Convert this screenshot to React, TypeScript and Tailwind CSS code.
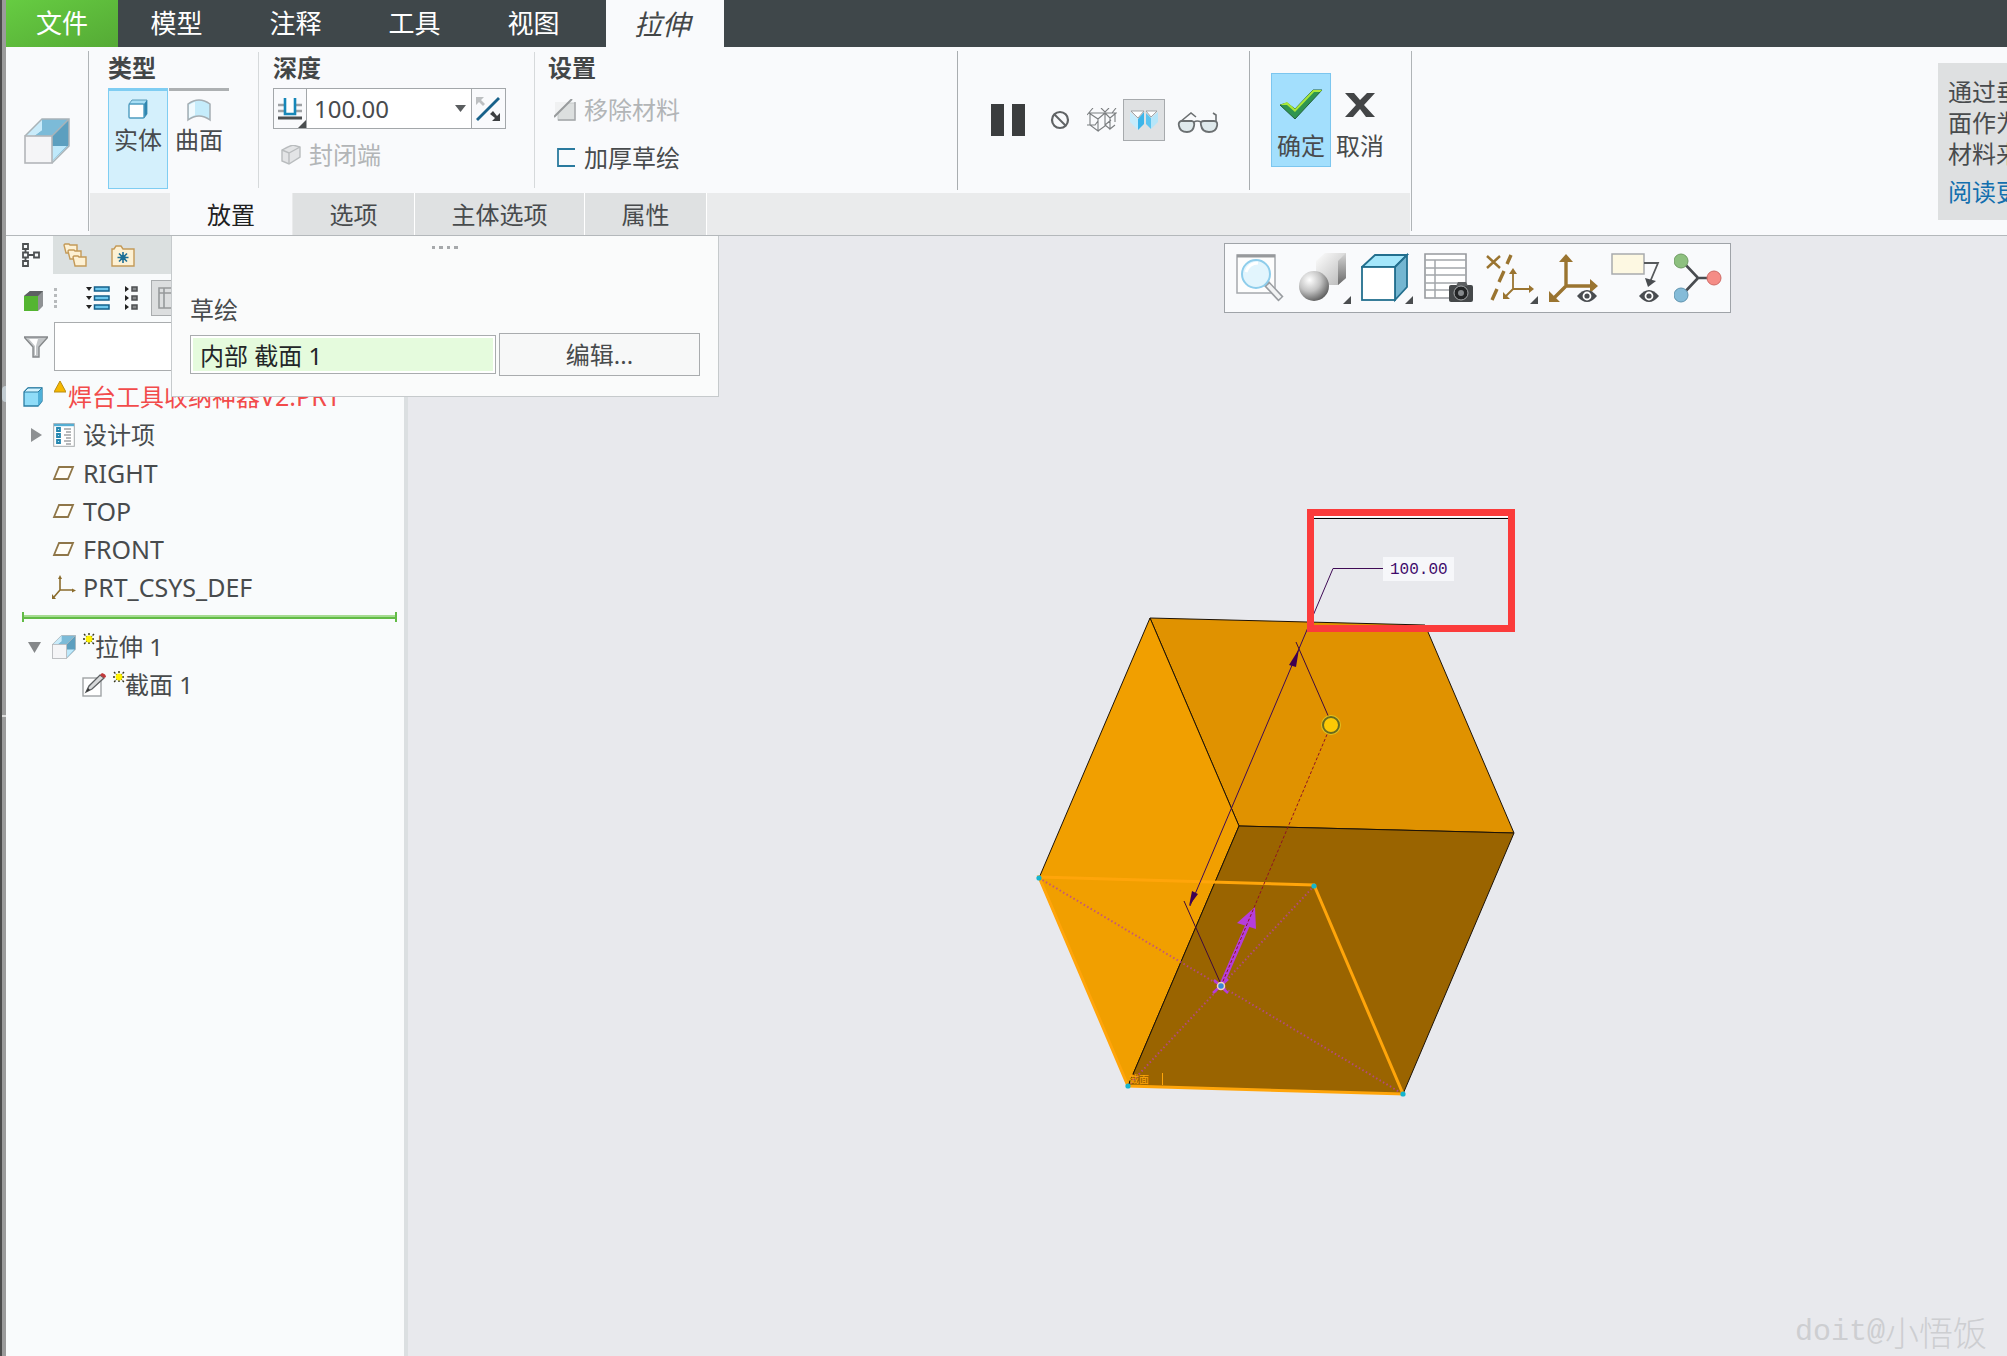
import type { ReactNode } from "react"

const menus = ["模型", "注释", "工具", "视图"]

function Divider({ dark = false }: { dark?: boolean }) {
    return <span className={dark ? "mt-1 h-[139px] w-px shrink-0 bg-[#a9adb0]" : "mt-[5px] h-[136px] w-px shrink-0 bg-[#d6d9db]"}></span>
}

function ExtrudeIcon({ className }: { className: string }) {
    return (
        <svg className={className} viewBox="0 0 46 46">
            <path d="M1 18 L18 1 H45 V28 L28 45 V18 Z" fill="#d8f1fc" />
            <path d="M18 1 H45 L28 18 H10 L18 12 Z" fill="#7cbbd8" />
            <path d="M18 1 V12 L10 18 H1 Z" fill="#c9ebfa" />
            <path d="M45 1 V27 L28 43 V18 Z" fill="#5c9fbf" />
            <path d="M28 43 V28 H43 Z" fill="#bfe9fb" />
            <path d="M1 18 L18 1 H45 V28 L28 45 M28 18 L45 1" fill="none" stroke="#a9b3b8" strokeWidth="1.5" />
            <rect x="1" y="18" width="27" height="27" fill="#f5f5f7" stroke="#b3b6b9" strokeWidth="1.6" />
        </svg>
    )
}

function Corner() {
    return (
        <svg className="absolute right-0 bottom-0 h-2 w-2" viewBox="0 0 8 8">
            <path d="M8 0 V8 H0 Z" fill="#4a4d4f" />
        </svg>
    )
}

function Star() {
    return (
        <svg className="h-3 w-3 shrink-0 -translate-y-2" viewBox="0 0 12 12">
            <path d="M1 1 L11 11 M11 1 L1 11 M6 0 V12 M0 6 H12" stroke="#33331a" strokeWidth="1.4" strokeDasharray="2 1" />
            <circle cx="6" cy="6" r="3.4" fill="#fff200" />
        </svg>
    )
}

function PlaneIcon() {
    return (
        <svg className="h-4 w-6" viewBox="0 0 24 16">
            <path d="M7 2 H21 L16 14 H2 Z" fill="#fffdf7" stroke="#8f7648" strokeWidth="1.8" />
        </svg>
    )
}

function CsysIcon() {
    return (
        <svg className="h-6 w-6" viewBox="0 0 24 24" fill="#8b6c2c" stroke="#8b6c2c">
            <path d="M8 3 V15 H21 M8 15 L2 22" fill="none" strokeWidth="1.6" />
            <path d="M8 0 L10 4 H6 Z M24 15.500 L20 13.500 V17.500 Z M0 19 V24 H4 Z" stroke="none" />
        </svg>
    )
}

function Eye({ x, y }: { x: number; y: number }) {
    return (
        <g transform={`translate(${x} ${y})`}>
            <path d="M0 6 Q10 -6 20 6 Q10 18 0 6 Z" fill="#494c50" />
            <circle cx="10" cy="6" r="4.400" fill="#fff" />
            <circle cx="10" cy="6" r="2.600" fill="#494c50" />
        </g>
    )
}

function Ribbon() {
    return (
        <section className="flex shrink-0 border-b border-[#b4b8bb] bg-[#f9fafc]">
            <div className="flex w-[82px] shrink-0 items-center justify-center">
                <ExtrudeIcon className="h-[46px] w-[46px]" />
            </div>
            <span className="my-1 mr-px w-px bg-[#b0b4b7]"></span>

            <div className="w-[1320px] shrink-0">
                <div className="flex h-[146px]">
                    {/* type */}
                    <div className="w-[168px] pt-[5px] pl-[18px]">
                        <h2 className="text-2xl leading-8 font-bold text-[#434647]">类型</h2>
                        <div className="mt-1 flex gap-px">
                            <button className="flex h-[101px] w-[60px] flex-col items-center border border-t-3 border-[#7fcdf2] bg-[#d4f0fc] pt-2">
                                <svg className="h-5 w-5" viewBox="0 0 20 20">
                                    <path d="M1 5 L4 1 H19 V15 L16 19 Z" fill="#a7def5" stroke="#5a9cba" />
                                    <path d="M16 5 L19 1 V15 L16 19 Z" fill="#2f86b0" />
                                    <rect x="1" y="5" width="15" height="14" rx="1" fill="#fff" stroke="#4d9cc0" strokeWidth="1.400" />
                                </svg>
                                <span className="mt-[5px] text-2xl leading-8">实体</span>
                            </button>
                            <button className="flex h-[101px] w-[60px] flex-col items-center border-t-3 border-[#adb0b2] pt-2">
                                <svg className="h-6 w-6" viewBox="0 0 24 24">
                                    <path d="M1 5 Q12 -3 23 5 V21 Q12 13 1 21 Z" fill="#c5ecfb" stroke="#a5adb2" strokeWidth="1.500" />
                                    <path d="M2 6 Q5 4 8 3 V16 Q5 17 2 19 Z" fill="#f0fafe" />
                                </svg>
                                <span className="mt-px text-2xl leading-8">曲面</span>
                            </button>
                        </div>
                    </div>
                    <Divider />

                    {/* depth */}
                    <div className="w-[275px] pt-[5px] pl-[14px]">
                        <h2 className="text-2xl leading-8 font-bold text-[#434647]">深度</h2>
                        <div className="mt-1 flex h-[41px] w-[233px] border border-[#a3a7aa] bg-white">
                            <button aria-label="深度类型" className="relative flex w-[33px] items-center justify-center border-r border-[#a3a7aa] bg-[#f9fafc]">
                                <svg className="h-6 w-6" viewBox="0 0 24 24">
                                    <path d="M0 8 H24 M0 14 H24" stroke="#9ea1a4" strokeWidth="2.400" />
                                    <path d="M0 21 H24" stroke="#4b4e50" strokeWidth="3" />
                                    <path d="M7 1 V17 H17 V1" fill="#fff" stroke="#1787b8" strokeWidth="2.600" />
                                </svg>
                                <Corner />
                            </button>
                            <div className="relative flex-1">
                                <select aria-label="深度值" className="h-full w-full appearance-none bg-transparent pl-[7px] text-2xl outline-none">
                                    <option>100.00</option>
                                </select>
                                <svg className="pointer-events-none absolute top-4 right-[5px] h-[7px] w-[11px]" viewBox="0 0 11 7">
                                    <path d="M0 0 H11 L5.500 7 Z" fill="#5a5d5f" />
                                </svg>
                            </div>
                            <button aria-label="反向" className="flex w-[34px] items-center justify-center border-l border-[#a3a7aa] bg-[#f9fafc] pr-0.5">
                                <svg className="h-6 w-6" viewBox="0 0 24 24">
                                    <path d="M1 23 L23 1" stroke="#17618a" strokeWidth="2.800" />
                                    <path d="M0 0 H8 L5 3 L9 7 L7 9 L3 5 L0 8 Z" fill="#bcbfc1" />
                                    <path d="M24 24 H16 L19 21 L14 17 L17 14 L21 19 L24 16 Z" fill="#3c3f41" />
                                </svg>
                            </button>
                        </div>
                        <button disabled className="mt-[10px] ml-2 flex items-center gap-2 text-2xl leading-8 text-[#b2b5b7]">
                            <svg className="h-5 w-5" viewBox="0 0 20 20">
                                <path d="M1 5 Q8 1 12 0 L19 2 V12 L8 19 L1 16 Z" fill="#e3e4e6" stroke="#b9bcbe" strokeWidth="1.400" />
                                <path d="M1 5 L8 8 L19 2 M8 8 V19" fill="none" stroke="#b9bcbe" strokeWidth="1.400" />
                            </svg>
                            封闭端
                        </button>
                    </div>
                    <Divider />

                    {/* settings */}
                    <div className="w-[422px] pt-[5px] pl-[13px]">
                        <h2 className="text-2xl leading-8 font-bold text-[#434647]">设置</h2>
                        <button disabled className="mt-[10px] ml-1.5 flex items-center gap-2 text-2xl leading-8 text-[#b2b5b7]">
                            <svg className="h-[22px] w-[22px]" viewBox="0 0 22 22">
                                <rect x="4" y="4" width="17" height="17" fill="#dcdfdf" stroke="#c6c9ca" />
                                <path d="M21 3 V21 H4" fill="none" stroke="#a5a8aa" strokeWidth="1.400" />
                                <path d="M1 3 H14 L1 16 Z" fill="#f0f1f2" />
                                <path d="M0 18 L18 0" stroke="#989b9d" strokeWidth="2" />
                            </svg>
                            移除材料
                        </button>
                        <button className="mt-4 ml-1.5 flex items-center gap-2 text-2xl leading-8">
                            <svg className="h-[22px] w-[22px]" viewBox="0 0 22 22">
                                <path d="M21 2 H4 V19 H21" fill="none" stroke="#2a7a9e" strokeWidth="1.800" />
                            </svg>
                            加厚草绘
                        </button>
                    </div>
                    <Divider dark />

                    {/* preview controls */}
                    <div className="flex w-[291px] items-center pl-[33px]">
                        <button aria-label="暂停" className="mr-[25px]">
                            <svg className="h-8 w-[34px]" viewBox="0 0 34 32">
                                <path d="M0 0 H13 V32 H0 Z M21 0 H34 V32 H21 Z" fill="#3b3d3e" />
                            </svg>
                        </button>
                        <button aria-label="无预览" className="mr-[17px]">
                            <svg className="h-5 w-5" viewBox="0 0 20 20">
                                <path d="M4 4 L16 16" stroke="#606365" strokeWidth="2" />
                                <circle cx="10" cy="10" r="8" fill="none" stroke="#606365" strokeWidth="2.200" />
                            </svg>
                        </button>
                        <button aria-label="分离" className="mr-1.5">
                            <svg className="h-6 w-[30px]" viewBox="0 0 30 24" fill="none" stroke="#7b7e80" strokeWidth="1.100">
                                <path d="M2 5 L11 11 L18 5 H2 M3 5 V17 L11 23 V11 M11 23 L18 18 V5 M18 5 L23 10 L29 5 H18 M23 10 V21 L28 17 M28 5 V14 M23 21 L18 17 M0 7 L6 0 M14 0 L18 4 L22 0 M0 17 H8 L11 13 M18 17 L24 12 M29 0 L25 5" />
                            </svg>
                        </button>
                        <button aria-label="连接" className="mr-3 flex h-[42px] w-[42px] items-center justify-center border border-[#a7aaad] bg-[#dfe1e3]">
                            <svg className="h-5 w-[30px]" viewBox="0 0 30 20">
                                <path d="M1 2 L9 9 V20 L1 12 Z" fill="#c6ecfc" />
                                <path d="M9 9 L15 2 V14 L9 20 Z" fill="#3db5e9" />
                                <path d="M17 3 L22 8 V19 L17 14 Z" fill="#5bc4f0" />
                                <path d="M22 8 L29 2 V12 L22 19 Z" fill="#b5e5f9" />
                                <path d="M2 1 H15 L9 8 Z M17 1 H28 L22 7 Z" fill="#fff" stroke="#8d9296" strokeWidth=".8" />
                            </svg>
                        </button>
                        <button aria-label="眼镜" className="mt-1.5">
                            <svg className="h-[22px] w-[42px]" viewBox="0 0 42 22">
                                <path d="M2 14 Q1 10 4 9 H15 Q18 10 17 14 Q16 20 10 20 Q3 20 2 14 Z M24 13 Q23 9 27 9 H37 Q41 9 40 14 Q39 20 32 20 Q25 20 24 13 Z" fill="#dfe9ec" stroke="#6b6f71" strokeWidth="1.800" />
                                <path d="M3 10 L14 1 L19 5 M17 10 Q20 8 24 10 M39 10 V3 L36 1" fill="none" stroke="#6b6f71" strokeWidth="1.600" />
                            </svg>
                        </button>
                    </div>
                    <Divider dark />

                    <div className="flex items-start pt-[26px] pl-[21px]">
                        <button className="flex h-[94px] w-[60px] flex-col items-center border border-[#7cc6ef] bg-[#a3dffd] pt-[15px]">
                            <svg className="h-[30px] w-[44px]" viewBox="0 0 44 30">
                                <path d="M1 16 L8 14 L16 20 L34 1 L43 1 L16 30 Z" fill="#2f9550" stroke="#24613a" />
                                <path d="M1 16 L8 13 L16 20 L34 1 H43 L41 3 H35 L16 23 L8 16 Z" fill="#a9e83a" />
                            </svg>
                            <span className="mt-[11px] text-2xl leading-8">确定</span>
                        </button>
                        <button className="flex h-[94px] w-[60px] flex-col items-center pt-5 pr-0.5">
                            <svg className="h-6 w-[30px]" viewBox="0 0 30 24">
                                <path d="M0 0 H9 L15 7 L22 0 H30 L19 12 L30 24 H21 L15 16 L8 24 H0 L11 12 Z" fill="#434547" />
                            </svg>
                            <span className="mt-[13px] text-2xl leading-8">取消</span>
                        </button>
                    </div>
                </div>

                {/* dashboard tabs */}
                <div className="flex h-[42px] gap-px bg-[#eaebec] pl-20 text-2xl *:pt-0.5">
                    <button className="w-[122px] bg-[#f9fafc] text-[#1f2122]">放置</button>
                    <button className="w-[121px] bg-[#dfe1e2] shadow-[1px_0_0_#fff]">选项</button>
                    <button className="w-[169px] bg-[#dfe1e2] shadow-[1px_0_0_#fff]">主体选项</button>
                    <button className="w-[121px] bg-[#dfe1e2] shadow-[1px_0_0_#fff]">属性</button>
                </div>
            </div>
            <span className="my-1 ml-px w-px shrink-0 bg-[#b0b4b7]"></span>

            <aside className="mt-4 ml-auto h-[157px] w-[69px] overflow-hidden bg-[#dee0e1] pt-[13px] pl-2.5 text-2xl leading-[31px] whitespace-nowrap">
                <p>通过垂<br />面作为<br />材料来</p>
                <a href="#help" className="mt-[7px] block text-[#136fae]">阅读更多</a>
            </aside>
        </section>
    )
}

function TreeRow({ icon, arrow, children, indent = "pl-[46px]" }: { icon: ReactNode; arrow?: ReactNode; children: ReactNode; indent?: string }) {
    return (
        <li className={`relative flex h-[38px] items-center gap-[7px] ${indent}`}>
            {arrow}
            <span className="flex w-6 shrink-0 justify-center">{icon}</span>
            {children}
        </li>
    )
}

function ModelTree() {
    return (
        <aside className="w-[402px] shrink-0 border-r-4 border-[#dbdfe1] bg-[#f9fbfc]">
            <div className="flex h-[38px] bg-[#dbe0e0]">
                <button aria-label="模型树" className="flex w-[47px] items-center justify-center bg-[#f9fbfc]">
                    <svg className="ml-0.5 h-6 w-[18px]" viewBox="0 0 18 24" fill="none" stroke="#4d5052" strokeWidth="1.800">
                        <path d="M1 1 H6 V6 H1 Z M1 9.500 H6 V14.500 H1 Z M1 18 H6 V23 H1 Z M12 9.500 H17 V14.500 H12 Z M3.500 6 V9.500 M3.500 14.500 V18 M6 12 H12" />
                    </svg>
                </button>
                <button aria-label="文件夹浏览器" className="ml-2.5">
                    <svg className="h-6 w-6" viewBox="0 0 24 24" fill="#fdf1d4" stroke="#c49a58" strokeWidth="1.400">
                        <path d="M1 2 L2 1 H6 L7 2 H14 V10 H3 Z" />
                        <path d="M5 8 L6 7 H11 L12 8 H18 V16 H7 Z" />
                        <path d="M10 14 L11 13 H15 L16 14 H23 V23 H12 Z" />
                    </svg>
                </button>
                <button aria-label="收藏夹" className="ml-6">
                    <svg className="h-6 w-6" viewBox="0 0 24 24">
                        <path d="M1 6 L3 6 L5 3 H10 L12 6 H23 V23 H1 Z" fill="#fdf1d4" stroke="#c49a58" strokeWidth="1.400" />
                        <path d="M12 9 V20 M6.500 14.500 H17.500 M8 10.500 L16 18.500 M16 10.500 L8 18.500" stroke="#1d6f96" strokeWidth="1.600" />
                        <circle cx="12" cy="14.500" r="2.600" fill="#1d6f96" />
                    </svg>
                </button>
            </div>

            <div className="mt-1.5 flex h-9 items-center pl-[18px]">
                <svg className="mt-1.5 h-5 w-5" viewBox="0 0 20 20">
                    <path d="M0 5 L6 0 H19 V15 L14 20 V5 Z" fill="#8f9294" />
                    <path d="M0 5 L6 0 H19 L14 5 Z" fill="#5d6062" />
                    <rect y="5" width="14" height="15" fill="#54b531" />
                </svg>
                <svg className="ml-2.5 h-5 w-1" viewBox="0 0 4 20" fill="#b7babc">
                    <path d="M0 0 H3 V3 H0 Z M0 6 H3 V9 H0 Z M0 12 H3 V15 H0 Z M0 17 H3 V20 H0 Z" />
                </svg>
                <button aria-label="全部展开" className="ml-7">
                    <svg className="h-6 w-6" viewBox="0 0 24 24">
                        <path d="M0 1 H6 L3 5 Z M0 10 H6 L3 14 Z M0 19 H6 L3 23 Z" fill="#222" />
                        <path d="M8.500 1 H23 V5 H8.500 Z M8.500 10 H23 V14 H8.500 Z M8.500 19 H23 V23 H8.500 Z" fill="#6fc8ee" stroke="#15608a" strokeWidth="1.500" />
                    </svg>
                </button>
                <button aria-label="全部折叠" className="ml-[15px]">
                    <svg className="h-6 w-3.5" viewBox="0 0 14 24">
                        <path d="M0 0 L4 3 L0 6 Z M0 9 L4 12 L0 15 Z M0 18 L4 21 L0 24 Z" fill="#222" />
                        <path d="M7 1 H12 V5 H7 Z M7 10 H12 V14 H7 Z M7 19 H12 V23 H7 Z" fill="#85888a" stroke="#4d5052" strokeWidth="1.500" />
                    </svg>
                </button>
                <button aria-label="树列" className="ml-3 flex h-9 w-10 items-center border border-[#a9acae] bg-[#dcdedf] pl-1.5">
                    <svg className="h-[22px] w-6" viewBox="0 0 24 22" fill="none" stroke="#96999b" strokeWidth="1.600">
                        <path d="M1 1 H23 V21 H1 Z M1 6 H23 M6 1 V21" />
                    </svg>
                </button>
            </div>

            <div className="mt-1.5 flex h-[49px] items-center pl-[18px]">
                <svg className="h-[22px] w-6 shrink-0" viewBox="0 0 24 22">
                    <path d="M0 1 H24 L15 11 V21 H9 V11 Z" fill="#c3c6c8" stroke="#85888a" strokeWidth="1.400" />
                    <path d="M5 3 L11 10 V19 L12 19 V10 L14 3 Z" fill="#fff" />
                </svg>
                <input aria-label="过滤器" className="ml-1.5 h-full w-[300px] border border-[#a9acae] bg-white px-2 text-2xl" />
            </div>

            <ul className="mt-[7px] text-2xl">
                <li className="flex h-[38px] items-center pl-[17px] text-[#f24b4b]">
                    <svg className="h-5 w-5 shrink-0" viewBox="0 0 20 20">
                        <path d="M1 5 L5 1 H19 V14 L15 19 H1 Z" fill="#8fdcf8" stroke="#2b7da3" strokeWidth="1.300" />
                        <path d="M15 5 L19 1 V14 L15 19 Z" fill="#4fb0d8" />
                        <path d="M1 5 L5 1 H19 L15 5 Z" fill="#d3f3fe" stroke="#2b7da3" />
                    </svg>
                    <svg className="ml-[11px] h-3 w-3 shrink-0 -translate-y-2.5" viewBox="0 0 12 12">
                        <path d="M6 0 L12 11 H0 Z" fill="#f6b800" stroke="#b98d12" />
                    </svg>
                    <span className="ml-0.5 whitespace-nowrap">焊台工具收纳神器<span className="text-[25px]">V2.PRT</span></span>
                </li>
                <TreeRow
                    arrow={<svg className="absolute left-[25px] h-3.5 w-[11px]" viewBox="0 0 11 14"><path d="M0 0 L11 7 L0 14 Z" fill="#8e9193" /></svg>}
                    icon={
                        <svg className="h-6 w-[22px]" viewBox="0 0 22 24">
                            <rect x=".7" y=".7" width="20.600" height="22.600" fill="#fff" stroke="#a5a9ac" />
                            <path d="M1 2 H21" stroke="#55aed3" strokeWidth="2.400" />
                            <path d="M11 6 H18 M13 9 H18 M11 12 H18 M13 15 H18 M11 18 H18 M13 21 H18" stroke="#a0a3a5" strokeWidth="1.300" />
                            <path d="M4 5 H7 V8 H4 Z M4 11 H7 V14 H4 Z M4 17 H7 V20 H4 Z" fill="#bfe8f8" stroke="#2587b0" strokeWidth="1.800" />
                        </svg>
                    }
                >
                    设计项
                </TreeRow>
                <TreeRow icon={<PlaneIcon />}><span className="text-[25px] leading-8">RIGHT</span></TreeRow>
                <TreeRow icon={<PlaneIcon />}><span className="text-[25px] leading-8">TOP</span></TreeRow>
                <TreeRow icon={<PlaneIcon />}><span className="text-[25px] leading-8">FRONT</span></TreeRow>
                <TreeRow icon={<CsysIcon />}><span className="text-[25px] leading-8">PRT_CSYS_DEF</span></TreeRow>
                <li className="mr-[7px] ml-4 flex h-[22px] items-center">
                    <span className="h-2.5 w-0.5 bg-[#62bb46]"></span>
                    <span className="h-1 flex-1 border-b-2 border-[#62bb46] bg-[#a5dc91]"></span>
                    <span className="h-2.5 w-0.5 bg-[#62bb46]"></span>
                </li>
                <TreeRow
                    arrow={<svg className="absolute left-[22px] h-[11px] w-[13px]" viewBox="0 0 13 11"><path d="M0 0 H13 L6.500 11 Z" fill="#85888a" /></svg>}
                    icon={<ExtrudeIcon className="h-6 w-6" />}
                >
                    <Star />
                    <span className="-ml-[7px]">拉伸 1</span>
                </TreeRow>
                <TreeRow
                    indent="pl-[76px]"
                    icon={
                        <svg className="h-6 w-6" viewBox="0 0 24 24">
                            <rect x="1" y="5" width="18" height="18" fill="#fff" stroke="#a0a3a5" strokeWidth="1.400" />
                            <path d="M4 19 L7 13 L18 2 L22 5 L10 16 Z" fill="#d8d9da" stroke="#5c5f61" strokeWidth="1.300" />
                            <path d="M18 2 L20 0 Q24 1 24 4 L22 5 Z" fill="#c0393b" />
                            <path d="M4 19 L6 15 L8 17 Z" fill="#333" />
                        </svg>
                    }
                >
                    <Star />
                    <span className="-ml-[7px]">截面 1</span>
                </TreeRow>
            </ul>
        </aside>
    )
}

function PlacementPanel() {
    return (
        <div className="absolute top-0 left-[165px] w-[548px] border border-t-0 border-[#c6cacc] bg-[#fafbfb] px-[18px] pt-2.5 pb-5 text-2xl">
            <svg className="mx-auto block h-[3px] w-[26px]" viewBox="0 0 26 3">
                <path d="M0 0 H3 V3 H0 Z M7 0 H11 V3 H7 Z M15 0 H18 V3 H15 Z M22 0 H26 V3 H22 Z" fill="#a6a9ab" />
            </svg>
            <label htmlFor="sketch" className="mt-[45px] block leading-8">草绘</label>
            <div className="mt-[7px] flex items-center gap-[3px]">
                <input id="sketch" readOnly value="内部 截面 1" className="h-[39px] w-[306px] border border-[#a9acae] bg-[#e5fbdd] px-[9px] text-[#232627] shadow-[inset_0_0_0_2px_#fff]" />
                <button className="h-[43px] w-[201px] border border-[#a9acae] bg-[#f7f8f8]">编辑...</button>
            </div>
        </div>
    )
}

function ViewToolbar() {
    const btn = "relative h-[52px] w-[52px]"
    return (
        <div className="absolute top-[7px] left-[816px] flex h-[70px] w-[507px] items-center justify-between border border-[#9fa3a8] bg-[#f9fafc] pr-1 pl-[11px]">
            <button aria-label="重新调整" className={btn}>
                <svg viewBox="0 0 52 52">
                    <rect x="1" y="3" width="38" height="38" fill="#fdfdfd" stroke="#a5a8ac" strokeWidth="1.500" />
                    <path d="M1 4 H39" stroke="#97999c" strokeWidth="3" />
                    <path d="M30 31 L45 47" stroke="#999ca0" strokeWidth="7" />
                    <path d="M32 33 L44 46" stroke="#f2f3f4" strokeWidth="4" />
                    <circle cx="20" cy="22" r="14" fill="#e2f5fd" stroke="#8ecdeb" strokeWidth="2" />
                    <path d="M10 20 Q13 11 22 11" fill="none" stroke="#fff" strokeWidth="3" />
                </svg>
            </button>
            <button aria-label="渲染选项" className={btn}>
                <svg viewBox="0 0 52 52">
                    <defs>
                        <radialGradient id="ball" cx=".35" cy=".3" r=".75"><stop offset="0" stopColor="#fff" /><stop offset=".5" stopColor="#c4c4c4" /><stop offset="1" stopColor="#5a5a5a" /></radialGradient>
                        <linearGradient id="box" x1="0" y1="0" x2="1" y2="1"><stop offset="0" stopColor="#fff" /><stop offset="1" stopColor="#b5b5b5" /></linearGradient>
                        <linearGradient id="side" x1="0" y1="0" x2="0" y2="1"><stop offset="0" stopColor="#d5d5d5" /><stop offset="1" stopColor="#6a6a6a" /></linearGradient>
                    </defs>
                    <path d="M17 9 L26 1 H47 V26 L39 33 H17 Z" fill="url(#box)" />
                    <path d="M39 9 L47 1 V26 L39 33 Z" fill="url(#side)" />
                    <circle cx="15" cy="34" r="15" fill="url(#ball)" />
                </svg>
                <Corner />
            </button>
            <button aria-label="显示样式" className={btn}>
                <svg viewBox="0 0 52 52" stroke="#236f8e" strokeWidth="1.800">
                    <path d="M1 15 L14 3 H46 L34 15 Z" fill="#a4e7fb" />
                    <path d="M34 15 L46 3 V35 L34 48 Z" fill="#74b6d1" />
                    <rect x="1" y="15" width="33" height="33" fill="#fff" />
                </svg>
                <Corner />
            </button>
            <button aria-label="视图管理器" className={btn}>
                <svg viewBox="0 0 52 52">
                    <path d="M1 2 H42 V46 H1 Z" fill="#fff" stroke="#96999d" strokeWidth="1.600" />
                    <path d="M1 8 H42 M1 16 H42 M1 23 H42 M1 31 H42 M1 38 H42 M11 8 V46" stroke="#a3a6aa" strokeWidth="1.500" />
                    <rect x="25" y="33" width="24" height="17" rx="2" fill="#45484a" />
                    <path d="M32 34 L34 30 H42 L44 34 Z" fill="#5d6062" />
                    <circle cx="37" cy="41" r="7" fill="#232526" stroke="#a6a9ab" />
                    <circle cx="37" cy="41" r="3" fill="#85898c" />
                </svg>
            </button>
            <button aria-label="基准显示过滤器" className={btn}>
                <svg viewBox="0 0 52 52" fill="none" stroke="#9a7430">
                    <path d="M1 4 L14 16 M14 4 L1 16" strokeWidth="2.400" />
                    <path d="M25 3 L21 12 M18 19 L13 30 M11 37 L6 48" strokeWidth="3.400" />
                    <path d="M27 20 V37 H45 M27 37 L18 46" strokeWidth="1.800" />
                    <path d="M27 16 L31 22 H23 Z M48 37 L43 33 V41 Z M17 40 V47 H24 Z" fill="#9a7430" stroke="none" />
                </svg>
                <Corner />
            </button>
            <button aria-label="坐标系显示" className={btn}>
                <svg viewBox="0 0 52 52">
                    <path d="M17 8 V34 H43 M17 34 L4 47" fill="none" stroke="#9a7430" strokeWidth="3.400" />
                    <path d="M17 2 L24 10 H10 Z M49 34 L41 27 V41 Z M0 39 V50 H11 Z" fill="#9a7430" />
                    <Eye x={28} y={38} />
                </svg>
            </button>
            <button aria-label="注释显示" className={btn}>
                <svg viewBox="0 0 52 52">
                    <rect x="1" y="2" width="32" height="20" fill="#fdf8e2" stroke="#a8abad" strokeWidth="1.500" />
                    <path d="M33 11 H47 L39 30" fill="none" stroke="#56595c" strokeWidth="1.800" />
                    <path d="M34 26 L45 29 L37 35 Z" fill="#494c50" />
                    <Eye x={28} y={38} />
                </svg>
            </button>
            <button aria-label="旋转中心" className={btn}>
                <svg viewBox="0 0 52 52">
                    <path d="M8 9 L24 26 H40 M24 26 L8 43" fill="none" stroke="#494c50" strokeWidth="2.600" />
                    <circle cx="7" cy="9" r="7" fill="#8dc07f" stroke="#6f9b63" />
                    <circle cx="40" cy="26" r="7" fill="#f58c86" stroke="#cf6a65" />
                    <circle cx="7" cy="43" r="7" fill="#84bbd8" stroke="#5f93ae" />
                </svg>
            </button>
        </div>
    )
}

function Model() {
    return (
        <svg className="absolute top-[264px] left-[622px] h-[610px] w-[500px]" viewBox="1030 500 500 610">
            <g stroke="#1c1206" strokeWidth="1">
                <path d="M1150 618 L1425 625 L1514 833 L1239 826 Z" fill="#e09200" />
                <path d="M1150 618 L1039 878 L1128 1086 L1239 826 Z" fill="#f19f00" />
                <path d="M1239 826 L1514 833 L1403 1094 L1128 1086 Z" fill="#9a6400" />
            </g>

            {/* sketched section */}
            <path d="M1039 878 L1403 1094 M1128 1086 L1314 886" stroke="#b8459a" strokeWidth="2" strokeDasharray="1.500 2.500" strokeOpacity=".8" />
            <path d="M1039 877 L1314 885 L1403 1094 L1128 1086 Z" fill="none" stroke="#ffa50a" strokeWidth="3" />
            <text x="1129" y="1083" fontSize="10" fill="#ffa50a">截面</text>
            <path d="M1162.500 1073 V1085" stroke="#ffa50a" />
            <g fill="#15b5cf">
                <circle cx="1039" cy="878" r="2.600" />
                <circle cx="1314" cy="886" r="2.600" />
                <circle cx="1403" cy="1094" r="2.600" />
                <circle cx="1128" cy="1086" r="2.600" />
            </g>

            {/* direction arrow */}
            <path d="M1221 986 L1249 922" stroke="#b63ddb" strokeWidth="4.500" />
            <path d="M1255 907 L1237 923 L1256 929 Z" fill="#b63ddb" />
            <path d="M1213 993 L1228 979 M1228 993 L1214 980" stroke="#b63ddb" strokeWidth="2.500" />
            <path d="M1221 986 L1331 725" stroke="#8d1226" strokeDasharray="3 2" />
            <circle cx="1221" cy="986" r="3.500" fill="#3c86d8" stroke="#f4d3c0" strokeWidth="1.500" />

            {/* dimension */}
            <path d="M1190 906 L1333 568.500 H1383" fill="none" stroke="#3e0a55" />
            <path d="M1184 901 L1220 982 M1296 642 L1330 720" stroke="#3e0a3c" />
            <path d="M1299 649 L1289 665 L1296 667 Z M1189 906 L1192 891 L1198 894 Z" fill="#3e0052" />
            <circle cx="1331" cy="725" r="10" fill="#e0c020" />
            <circle cx="1331" cy="725" r="8" fill="#fcc905" stroke="#686a1e" strokeWidth="2" />

            <path d="M1314 516.500 H1508" stroke="#fff" strokeWidth="2" />
            <path d="M1314 518.500 H1508" stroke="#000" />
            <rect x="1310.500" y="512.500" width="201" height="116" fill="none" stroke="#fb3b3b" strokeWidth="7" />
            <rect x="1383" y="557" width="71" height="24" fill="#f6f7fa" />
            <text x="1390" y="574" fontSize="16" fill="#3e0a6b" fontFamily="Liberation Mono, monospace">100.00</text>
        </svg>
    )
}

export default function App() {
    return (
        <div className="flex h-screen overflow-hidden bg-[#e8e9ed] font-['Noto_Sans','Noto_Sans_CJK_SC',sans-serif] text-[#484b4d]">
            <div className="w-1.5 shrink-0 border-l-2 border-[#4b4b4b] bg-[#9b9b9b] pt-[386px]">
                <div className="h-4 rounded-l bg-[#c3ccd2]"></div>
                <div className="mt-[313px] h-0.5 bg-[#dcdcdc]"></div>
            </div>
            <div className="flex min-w-0 flex-1 flex-col">
                <nav className="flex h-[47px] shrink-0 bg-[#3f474a] text-[26px] text-white">
                    <button className="w-28 bg-linear-to-br from-[#66cc42] to-[#55aa35]">文件</button>
                    {menus.map((m) => (
                        <button key={m} className="w-[119px] pr-0.5">{m}</button>
                    ))}
                    <button className="ml-3 w-[118px] bg-[#f9fafc] pr-1.5 text-[28px] text-[#434647] italic">拉伸</button>
                </nav>

                <Ribbon />

                <main className="relative flex min-h-0 flex-1">
                    <ModelTree />
                    <div className="relative min-w-0 flex-1">
                        <ViewToolbar />
                        <Model />
                        <p className="absolute right-5 bottom-1 flex items-center leading-10 text-[#cdced1]">
                            <span className="font-['Liberation_Mono',monospace] text-[30px]">doit@</span>
                            <span className="font-['Noto_Sans_CJK_SC',sans-serif] text-[34px] font-light">小悟饭</span>
                        </p>
                    </div>
                    <PlacementPanel />
                </main>
            </div>
        </div>
    )
}
